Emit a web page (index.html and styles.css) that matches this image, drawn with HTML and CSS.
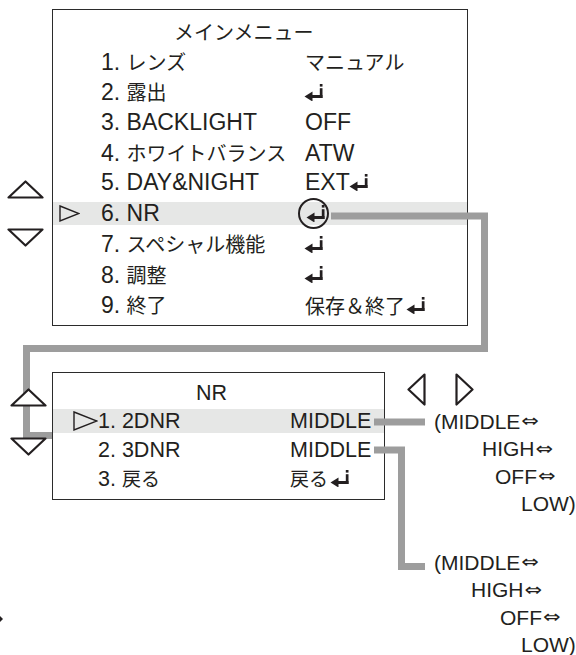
FILE: index.html
```html
<!DOCTYPE html>
<html lang="ja">
<head>
    <meta charset="UTF-8">
    <meta name="viewport" content="width=device-width, initial-scale=1.0">
    <title>メインメニュー / NR</title>
    <link rel="stylesheet" href="styles.css">
</head>
<body>
    <svg class="defs" width="0" height="0" aria-hidden="true">
        <symbol id="enter" viewBox="0 0 18 17">
            <path d="M0 12.5 L8 7.5 V17.5 Z"/>
            <rect x="7" y="11" width="11" height="3"/>
            <rect x="15.3" y="4.2" width="2.7" height="9.8"/>
            <rect x="15.3" y="0" width="2.7" height="2.6"/>
        </symbol>
    </svg>

    <div class="canvas">
        <!-- main menu -->
        <section class="menu menu-main">
            <div class="menu-title"><span class="ja">メインメニュー</span></div>
            <div class="row"><span class="mark"></span><span class="label">1. <span class="ja">レンズ</span></span><span class="value ja">マニュアル</span></div>
            <div class="row"><span class="mark"></span><span class="label">2. <span class="ja">露出</span></span><span class="value"><svg class="enter"><use href="#enter"/></svg></span></div>
            <div class="row"><span class="mark"></span><span class="label">3. BACKLIGHT</span><span class="value">OFF</span></div>
            <div class="row"><span class="mark"></span><span class="label">4. <span class="ja">ホワイトバランス</span></span><span class="value">ATW</span></div>
            <div class="row"><span class="mark"></span><span class="label">5. DAY&amp;NIGHT</span><span class="value">EXT<svg class="enter"><use href="#enter"/></svg></span></div>
            <div class="row is-active">
                <span class="mark"><svg class="pointer" viewBox="0 0 21 17"><polygon points="1,1 20,8.5 1,16"/></svg></span>
                <span class="label">6. NR</span>
                <span class="value"><span class="ring"></span><svg class="enter"><use href="#enter"/></svg></span>
            </div>
            <div class="row"><span class="mark"></span><span class="label">7. <span class="ja">スペシャル機能</span></span><span class="value"><svg class="enter"><use href="#enter"/></svg></span></div>
            <div class="row"><span class="mark"></span><span class="label">8. <span class="ja">調整</span></span><span class="value"><svg class="enter"><use href="#enter"/></svg></span></div>
            <div class="row"><span class="mark"></span><span class="label">9. <span class="ja">終了</span></span><span class="value"><span class="ja">保存＆終了</span><svg class="enter"><use href="#enter"/></svg></span></div>
        </section>

        <!-- NR sub menu -->
        <section class="menu menu-sub">
            <div class="menu-title">NR</div>
            <div class="row is-active">
                <span class="mark"><svg class="pointer" viewBox="0 0 25 20"><polygon points="1,1 24,10 1,19"/></svg></span>
                <span class="label">1. 2DNR</span>
                <span class="value">MIDDLE</span>
            </div>
            <div class="row"><span class="mark"></span><span class="label">2. 3DNR</span><span class="value">MIDDLE</span></div>
            <div class="row"><span class="mark"></span><span class="label">3. <span class="ja">戻る</span></span><span class="value"><span class="ja">戻る</span><svg class="enter enter-gap"><use href="#enter"/></svg></span></div>
        </section>

        <!-- connector lines -->
        <svg class="wires" viewBox="0 0 576 655">
            <polyline points="331,216 484.5,216 484.5,348.5 26.5,348.5 26.5,435.5 52,435.5"/>
            <polyline points="374,422 425,422"/>
            <polyline points="374,450 401.5,450 401.5,566.5 425,566.5"/>
        </svg>

        <!-- cursor keys -->
        <svg class="key key-up key-main-up" viewBox="0 0 37 19"><polygon points="1.5,17.5 18.5,1.5 35.5,17.5"/></svg>
        <svg class="key key-down key-main-down" viewBox="0 0 37 19"><polygon points="1.5,1.5 35.5,1.5 18.5,17.5"/></svg>
        <svg class="key key-up key-sub-up" viewBox="0 0 37 19"><polygon points="1.5,17.5 18.5,1.5 35.5,17.5"/></svg>
        <svg class="key key-down key-sub-down" viewBox="0 0 37 19"><polygon points="1.5,1.5 35.5,1.5 18.5,17.5"/></svg>
        <svg class="key key-side key-left" viewBox="0 0 19 33"><polygon points="17.5,1.5 1.5,16.5 17.5,31.5"/></svg>
        <svg class="key key-side key-right" viewBox="0 0 19 33"><polygon points="1.5,1.5 17.5,16.5 1.5,31.5"/></svg>

        <!-- value cycles -->
        <div class="options options-2d">
            <div class="step">(MIDDLE<span class="dbl">⇔</span></div>
            <div class="step step-high">HIGH<span class="dbl">⇔</span></div>
            <div class="step step-off">OFF<span class="dbl">⇔</span></div>
            <div class="step step-low">LOW)</div>
        </div>
        <div class="options options-3d">
            <div class="step">(MIDDLE<span class="dbl">⇔</span></div>
            <div class="step step-high">HIGH<span class="dbl">⇔</span></div>
            <div class="step step-off">OFF<span class="dbl">⇔</span></div>
            <div class="step step-low">LOW)</div>
        </div>

        <span class="stray"></span>
    </div>
</body>
</html>
```

FILE: styles.css
```css
body {
    margin: 0;
    background: #fff;
    color: #231f20;
    font-family: "Liberation Sans", "Noto Sans CJK JP", sans-serif;
}
.defs {
    position: absolute;
}
.canvas {
    position: relative;
    width: 576px;
    height: 655px;
    overflow: hidden;
}
.ja {
    font-family: "Noto Sans CJK JP", sans-serif;
}

/* menu boxes */
.menu {
    position: absolute;
    box-sizing: border-box;
    border: 1px solid #2b2b2b;
    display: flex;
    flex-direction: column;
}
.row {
    display: grid;
    align-items: center;
    white-space: nowrap;
}
.row.is-active {
    background: #e6e7e6;
}
.mark {
    display: flex;
    align-items: center;
}
.value {
    position: relative;
    display: flex;
    align-items: center;
}
.pointer polygon {
    fill: none;
    stroke: #231f20;
    stroke-width: 1.4;
    stroke-linejoin: miter;
}
.enter {
    width: 19px;
    height: 17px;
    fill: #231f20;
    margin-left: 1px;
}
.value > .enter:first-child {
    margin-left: -1px;
}
.enter-gap {
    margin-left: 2px;
}
.ring {
    position: absolute;
    left: -7px;
    top: 50%;
    width: 27px;
    height: 27px;
    margin-top: -15px;
    border: 2px solid #231f20;
    border-radius: 50%;
}

.menu-main {
    left: 52px;
    top: 9px;
    width: 416px;
    height: 317px;
    padding-top: 9.5px;
    gap: 7.4px;
    font-size: 23px;
}
.menu-main .menu-title,
.menu-main .row {
    height: 23px;
    line-height: 23px;
}
.menu-main .menu-title {
    padding-left: 121px;
}
.menu-main .row {
    grid-template-columns: 48px 204px 1fr;
}
.menu-main .ja {
    font-size: 20px;
}
.menu-main .pointer {
    width: 21px;
    height: 17px;
    margin-left: 6px;
}

.menu-sub {
    left: 52px;
    top: 372px;
    width: 333px;
    height: 128px;
    padding-top: 8px;
    gap: 4.3px;
    font-size: 21.5px;
}
.menu-sub .menu-title,
.menu-sub .row {
    height: 24px;
    line-height: 24px;
}
.menu-sub .menu-title {
    padding-left: 143px;
}
.menu-sub .row {
    grid-template-columns: 45px 192px 1fr;
}
.menu-sub .ja {
    font-size: 19px;
}
.menu-sub .pointer {
    width: 25px;
    height: 20px;
    margin-left: 20px;
}

/* connectors */
.wires {
    position: absolute;
    left: 0;
    top: 0;
    width: 576px;
    height: 655px;
}
.wires polyline {
    fill: none;
    stroke: #9d9d9d;
    stroke-width: 7;
    stroke-linejoin: miter;
}

/* cursor keys */
.key {
    position: absolute;
}
.key polygon {
    fill: #fff;
    stroke: #231f20;
    stroke-width: 2.2;
    stroke-linejoin: round;
}
.key-up,
.key-down {
    width: 37px;
    height: 19px;
}
.key-main-up { left: 7px; top: 180px; }
.key-main-down { left: 7px; top: 228px; }
.key-sub-up { left: 10px; top: 388px; }
.key-sub-down { left: 10px; top: 437px; }
.key-side {
    width: 19px;
    height: 33px;
    top: 373px;
}
.key-side polygon {
    fill: none;
}
.key-left { left: 407px; }
.key-right { left: 455px; }

/* option cycles */
.options {
    position: absolute;
    left: 434px;
    font-size: 21px;
    white-space: nowrap;
}
.step {
    display: flex;
    align-items: center;
    height: 27.5px;
}
.dbl {
    font-family: "DejaVu Sans", sans-serif;
    font-size: 21px;
    line-height: 1;
    margin-left: 1px;
    transform: scaleY(0.85);
}
.options-2d {
    top: 408px;
}
.options-3d {
    top: 549px;
}
.options-2d .step-high { padding-left: 48px; }
.options-2d .step-off { padding-left: 61px; }
.options-3d .step-high { padding-left: 37px; }
.options-3d .step-off { padding-left: 66px; }
.step-low { padding-left: 87px; }

.stray {
    position: absolute;
    left: 0;
    top: 616px;
    border-top: 3px solid transparent;
    border-bottom: 3px solid transparent;
    border-left: 3px solid #231f20;
}
```
